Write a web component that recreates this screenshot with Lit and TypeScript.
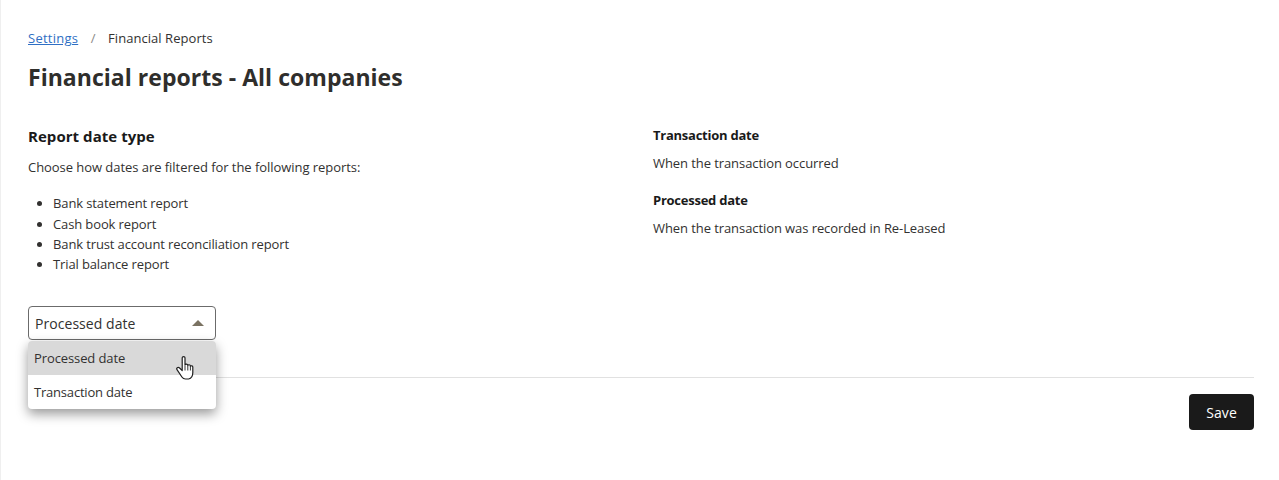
import { LitElement, html, css } from "lit";
import { customElement } from "lit/decorators.js";

@customElement("app-root")
export class AppRoot extends LitElement {
  static styles = css`
    :host {
      display: block;
      height: 480px;
      box-sizing: border-box;
      border-left: 1px solid #efefef;
      padding: 28px 25px 0 27px;
      font-family: "Open Sans", "Noto Sans", sans-serif;
      font-size: 13px;
      color: #323130;
      background: #fff;
      overflow: hidden;
    }
    .crumbs {
      display: flex;
      align-items: center;
      height: 20px;
      line-height: 20px;
      letter-spacing: 0.05px;
    }
    .crumbs a {
      color: #2f6fc4;
      text-decoration: underline;
      letter-spacing: 0.25px;
    }
    .crumbs .sep {
      margin: 0 12.5px 0 12.5px;
      color: #8a8886;
    }
    h1 {
      margin: 13px 0 0;
      font-size: 23px;
      line-height: 32px;
      font-weight: 700;
      color: #2f2e2c;
      letter-spacing: 0.03px;
    }
    .columns {
      display: grid;
      grid-template-columns: 625px 1fr;
      margin-top: 33px;
    }
    h2 {
      margin: 0;
      font-size: 15px;
      line-height: 20px;
      font-weight: 700;
      color: #1a1a1a;
      letter-spacing: 0.05px;
    }
    h3 {
      margin: 0;
      font-size: 13px;
      line-height: 18px;
      font-weight: 700;
      color: #1a1a1a;
      letter-spacing: -0.25px;
    }
    p {
      margin: 0;
      line-height: 18px;
      letter-spacing: -0.08px;
    }
    .intro {
      margin-top: 12px;
      letter-spacing: -0.05px;
    }
    ul {
      margin: 17.4px 0 0;
      padding: 0 0 0 25px;
      letter-spacing: -0.12px;
    }
    li {
      height: 20.3px;
      line-height: 20px;
    }
    .side p {
      margin-top: 10px;
    }
    .side h3 + p + h3 {
      margin-top: 19px;
    }
    .select-wrap {
      position: relative;
      width: 188px;
      margin-top: 31.6px;
    }
    .select {
      box-sizing: border-box;
      height: 34px;
      border: 1px solid #6b6b6b;
      border-radius: 4px;
      display: flex;
      align-items: center;
      justify-content: space-between;
      padding: 0 11px 0 6px;
      font-size: 14px;
      letter-spacing: 0.05px;
    }
    .caret {
      width: 0;
      height: 0;
      border-left: 6px solid transparent;
      border-right: 6px solid transparent;
      border-bottom: 6px solid #7a7262;
    }
    .menu {
      position: absolute;
      top: 35px;
      left: 0;
      right: 0;
      background: #fff;
      border-radius: 4px;
      box-shadow: 0 5px 12px rgba(0, 0, 0, 0.4);
      overflow: hidden;
      z-index: 2;
    }
    .item {
      height: 34px;
      line-height: 34px;
      padding-left: 6px;
      letter-spacing: -0.2px;
    }
    .item.on {
      background: #d9d9d9;
      letter-spacing: -0.1px;
    }
    .cursor {
      position: absolute;
      left: 148px;
      top: 50px;
      z-index: 3;
    }
    hr {
      border: 0;
      border-top: 1px solid #e1e1e1;
      margin: 37px 0 0;
    }
    .actions {
      display: flex;
      justify-content: flex-end;
      margin-top: 16px;
    }
    button {
      width: 65px;
      height: 36px;
      border: 0;
      border-radius: 4px;
      background: #1a1a1a;
      color: #fff;
      font: inherit;
      font-size: 14px;
      letter-spacing: 0.1px;
    }
  `;

  render() {
    return html`
      <nav class="crumbs">
        <a href="#">Settings</a><span class="sep">/</span><span>Financial Reports</span>
      </nav>
      <h1>Financial reports - All companies</h1>
      <div class="columns">
        <div>
          <h2>Report date type</h2>
          <p class="intro">Choose how dates are filtered for the following reports:</p>
          <ul>
            <li>Bank statement report</li>
            <li>Cash book report</li>
            <li>Bank trust account reconciliation report</li>
            <li>Trial balance report</li>
          </ul>
          <div class="select-wrap">
            <div class="select"><span>Processed date</span><span class="caret"></span></div>
            <div class="menu">
              <div class="item on">Processed date</div>
              <div class="item">Transaction date</div>
            </div>
            <svg class="cursor" width="19" height="25" viewBox="0 0 19 25">
              <path
                d="M6.2 1.8c0-1.6 2.8-1.6 2.8 0V9c.2-1.3 2.6-1.3 2.8.1v.5c.3-1.2 2.4-1.1 2.6.3v.5c.4-1 2.4-.8 2.4.6v5.5c0 3-1.6 6-4.2 6.5H9.5c-1.8 0-2.8-.8-3.6-2L1 13.6c-1-1.5 1-3 2.3-1.8l2.9 2.7z"
                fill="#fff"
                stroke="#1f1f1f"
                stroke-width="1.2"
                stroke-linejoin="round"
              />
              <path d="M9 9.5v5M11.8 10v4.5M14.4 10.5v4" stroke="#1f1f1f" stroke-width="0.9" fill="none" />
            </svg>
          </div>
        </div>
        <div class="side">
          <h3>Transaction date</h3>
          <p>When the transaction occurred</p>
          <h3>Processed date</h3>
          <p>When the transaction was recorded in Re-Leased</p>
        </div>
      </div>
      <hr />
      <div class="actions"><button>Save</button></div>
    `;
  }
}
